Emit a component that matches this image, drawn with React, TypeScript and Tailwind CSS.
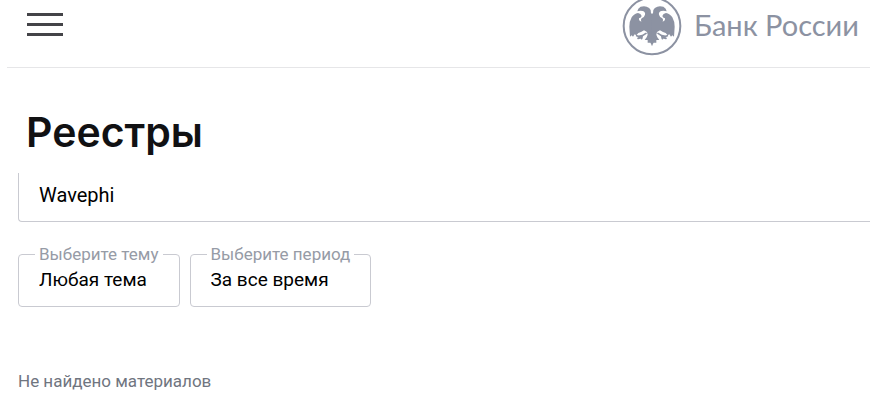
import { useState } from 'react';

function BankLogo() {
  return (
    <svg viewBox="0 0 180 180" className="size-15 shrink-0" aria-hidden="true">
      <circle cx="90" cy="90" r="85" fill="none" stroke="#8c92a2" strokeWidth="6" />
      <defs>
        {/* left half of the eagle, mirrored for the right one */}
        <g id="eagle-half">
          <path
            fill="#8c92a2"
            d="M91 54 L87 52 L86 42 Q83 34 74 32 L66 31 Q54 31 49 38 L46 46 Q54 43 62 45 Q71 48 69 56 Q67 64 59 67 Q55 71 58 77 Q50 75 51 67 Q58 65 59 60 Q57 52 48 51 Q36 53 29 64 Q22 76 22 92 L23 108 L24 122 L29 118 L33 122 L38 115 L43 118 L49 111 L57 108 L66 103 L75 108 L77 116 L74 124 L68 132 L77 132 L77 140 L85 140 L91 150 Z"
          />
          <path
            fill="none"
            stroke="#8c92a2"
            strokeWidth="5"
            strokeLinecap="round"
            d="M72 112 L61 119 L50 121 L44 119 M61 119 L56 125 L48 127 M61 119 L59 128"
          />
        </g>
      </defs>
      <use href="#eagle-half" />
      <use href="#eagle-half" transform="translate(180 0) scale(-1 1)" />
    </svg>
  );
}

interface FilterProps {
  id: string;
  label: string;
  options: string[];
}

function Filter({ id, label, options }: FilterProps) {
  return (
    <fieldset className="rounded border border-[#c9cad1] px-4 pb-[10px]">
      <legend className="h-5 px-1 text-[17px] leading-5 text-[#969ba6]">
        <label htmlFor={id}>{label}</label>
      </legend>
      <select
        id={id}
        className="block h-8 w-full appearance-none bg-transparent pl-1 text-[19px] leading-8 text-black outline-none"
      >
        {options.map((option) => (
          <option key={option}>{option}</option>
        ))}
      </select>
    </fieldset>
  );
}

export default function App() {
  const [query, setQuery] = useState('Wavephi');

  return (
    <div className="overflow-hidden bg-white font-['Roboto',sans-serif]">
      <header className="ml-[7px] flex h-17 items-start justify-between border-b border-[#e6e6e8] pl-5 pr-[11px]">
        <button type="button" aria-label="Меню" className="mt-[13px] flex w-9 flex-col gap-[7px]">
          <span className="h-[3px] w-full bg-[#444448]" />
          <span className="h-[3px] w-full bg-[#444448]" />
          <span className="h-[3px] w-full bg-[#444448]" />
        </button>
        <a
          href="#"
          className="-mt-1 flex items-center gap-3 font-['Lato',sans-serif] text-[29px] leading-none text-[#8c92a2]"
        >
          <BankLogo />
          <span className="pb-1">Банк России</span>
        </a>
      </header>

      <main className="pl-[18px]">
        <h1 className="mt-9 pl-2 font-['Inter',sans-serif] text-[41px] leading-[56px] font-semibold text-[#111113]">
          Реестры
        </h1>

        <form className="mt-[13px]">
          <input
            type="text"
            aria-label="Поиск"
            value={query}
            onChange={(e) => setQuery(e.target.value)}
            className="block h-[49px] w-full rounded-bl border-b border-l border-[#c9cad1] pb-1 pl-5 text-xl text-black outline-none"
          />

          <div className="mt-[22px] flex gap-[10px]">
            <Filter id="topic" label="Выберите тему" options={['Любая тема']} />
            <Filter id="period" label="Выберите период" options={['За все время']} />
          </div>
        </form>

        <p className="mt-[62px] text-[17px] leading-6 text-[#70757f]">Не найдено материалов</p>
      </main>
    </div>
  );
}
